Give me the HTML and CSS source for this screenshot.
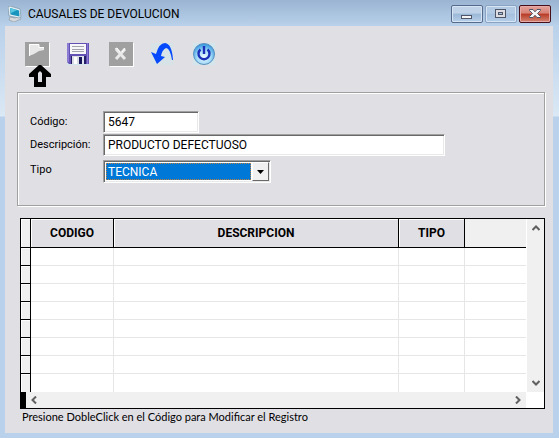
FILE: index.html
```html
<!DOCTYPE html>
<html lang="es">
<head>
<meta charset="utf-8">
<title>CAUSALES DE DEVOLUCION</title>
<link rel="stylesheet" href="styles.css">
</head>
<body>
<div class="window">
  <header class="titlebar">
    <svg class="app-icon" width="14" height="16" viewBox="0 0 14 16" aria-hidden="true">
      <path d="M2 11L7 12L12 10L13 13L6 16L1 14Z" fill="#d5d9dc" stroke="#8c969d" stroke-width=".6"/>
      <path d="M0 1L2 0L12 3L13 11L11 12L1 10Z" fill="#e4eef3" stroke="#7893a5" stroke-width=".7"/>
      <path d="M2 2L11 4.500L11.500 10.500L2.500 8.500Z" fill="#1795bd"/>
      <path d="M2 2L9 4L3 7Z" fill="#5ac6df"/>
    </svg>
    <h1 class="title">CAUSALES DE DEVOLUCION</h1>
    <div class="controls">
      <button class="control" type="button" aria-label="Minimizar"><svg width="12" height="12" viewBox="0 0 12 12"><rect x=".5" y="7.500" width="10" height="3" fill="#f4f4f4" stroke="#50566a"/></svg></button>
      <button class="control control-off" type="button" aria-label="Maximizar"><svg width="12" height="12" viewBox="0 0 12 12"><rect x=".5" y="1.500" width="10" height="8" fill="#dcdde2" stroke="#50566a"/><rect x="3.500" y="4.500" width="4" height="2" fill="#a9bfdb" stroke="#50566a"/></svg></button>
      <button class="control control-close" type="button" aria-label="Cerrar"><svg width="12" height="12" viewBox="0 0 12 12"><path d="M.5 1.500H4L6 3.800L8 1.500H11.500V2.500L8.500 5.500L11.500 8.500V9.500H8L6 7.300L4 9.500H.5V8.500L3.500 5.500L.5 2.500Z" fill="#f4f4f4" stroke="#505468"/></svg></button>
    </div>
  </header>
  <main class="client">
    <div class="toolbar">
      <button class="tool tool-off" type="button" aria-label="Nuevo">
        <svg width="24" height="24" viewBox="0 0 24 24"><path d="M4 2H14V5H19V8L14 9L9 12L4 14Z" fill="#e8e8e8"/><path d="M4.500 14V2.500H14V5.500H19" fill="none" stroke="#fff"/></svg>
        <svg class="pointer" width="24" height="22" viewBox="0 0 24 22"><path d="M11 0H13L23 9V12H18V22H6V12H1V9Z"/><path d="M12 6L14 8V17H10V8Z" fill="#e0dfe4"/></svg>
      </button>
      <button class="tool" type="button" aria-label="Guardar">
        <svg width="24" height="24" viewBox="0 0 24 24"><rect x="0" y="1" width="22" height="22" fill="#d2e6ec"/><path d="M0 1H22V22H2L0 20Z" fill="#6351b5"/><path d="M0 1H2V20H0ZM20 1H21V22H20Z" fill="#8c7bd2"/><rect x="3" y="2" width="16" height="10" fill="#f7f7f9"/><path d="M5 4.500H17M5 7.500H17M5 9.500H17" stroke="#a2a2ac"/><path d="M4 14H19V22H4Z" fill="#252066"/><path d="M5 14H14V22H5Z" fill="#d9dce4"/><path d="M7 15H10V22H7Z" fill="#fff"/><path d="M14 14H17V22H14Z" fill="#dfe4ee"/><path d="M12 15H15V22H12Z" fill="#18175b"/></svg>
      </button>
      <button class="tool tool-off" type="button" aria-label="Eliminar">
        <svg width="24" height="24" viewBox="0 0 24 24"><path d="M7 7L16 17M16 7L7 17" stroke="#e9e9e9" stroke-width="3"/><path d="M6 7L8 6L11 10M13 10L16 6" stroke="#fff" fill="none"/></svg>
      </button>
      <button class="tool" type="button" aria-label="Deshacer">
        <svg width="24" height="24" viewBox="0 0 24 24"><rect x="0" y="1" width="22" height="22" fill="#d8e3e8"/><path d="M0 10L5 12Q8 1 14 1Q21 2 22 18H21Q19 6 15 6Q11 8 10 14L14 15L6 22Z" fill="#0648fb"/></svg>
      </button>
      <button class="tool" type="button" aria-label="Salir">
        <svg width="24" height="24" viewBox="0 0 24 24"><defs><radialGradient id="orb" cx=".5" cy=".65" r=".6"><stop offset="0" stop-color="#f0fbff"/><stop offset=".55" stop-color="#a4dbf7"/><stop offset="1" stop-color="#3d9de3"/></radialGradient></defs><rect x="0" y="1" width="22" height="22" fill="#d2e6ec"/><circle cx="11" cy="12" r="10.500" fill="url(#orb)" stroke="#5e8fbc"/><path d="M7.500 7.500A5.500 5.500 0 1 0 14.500 7.500M11 4V12" fill="none" stroke="#1b2fb8" stroke-width="2.400"/></svg>
      </button>
    </div>
    <form class="panel">
      <label for="codigo">Código:</label>
      <input class="field field-code" id="codigo" type="text" value="5647">
      <label for="descripcion">Descripción:</label>
      <input class="field field-desc" id="descripcion" type="text" value="PRODUCTO DEFECTUOSO">
      <label for="tipo">Tipo</label>
      <div class="field combo">
        <select id="tipo"><option>TECNICA</option></select>
        <span class="combo-arrow"><svg width="7" height="4" viewBox="0 0 7 4"><path d="M0 0H7L3.500 4Z"/></svg></span>
      </div>
    </form>
    <section class="grid">
      <table>
        <colgroup><col class="col-mark"><col class="col-code"><col class="col-desc"><col class="col-type"><col></colgroup>
        <thead><tr><th class="mark"></th><th>CODIGO</th><th>DESCRIPCION</th><th>TIPO</th><th class="rest"></th></tr></thead>
        <tbody>
          <tr><td class="mark"></td><td></td><td></td><td></td><td></td></tr>
          <tr><td class="mark"></td><td></td><td></td><td></td><td></td></tr>
          <tr><td class="mark"></td><td></td><td></td><td></td><td></td></tr>
          <tr><td class="mark"></td><td></td><td></td><td></td><td></td></tr>
          <tr><td class="mark"></td><td></td><td></td><td></td><td></td></tr>
          <tr><td class="mark"></td><td></td><td></td><td></td><td></td></tr>
          <tr><td class="mark"></td><td></td><td></td><td></td><td></td></tr>
          <tr><td class="mark"></td><td></td><td></td><td></td><td></td></tr>
        </tbody>
      </table>
      <div class="scroll scroll-v">
        <button type="button" aria-label="Subir"><svg width="8" height="8" viewBox="0 0 8 8"><path d="M.5 6L4 2.500L7.500 6"/></svg></button>
        <button type="button" aria-label="Bajar"><svg width="8" height="8" viewBox="0 0 8 8"><path d="M.5 2L4 5.500L7.500 2"/></svg></button>
      </div>
      <div class="scroll scroll-h">
        <button type="button" aria-label="Izquierda"><svg width="8" height="8" viewBox="0 0 8 8"><path d="M6 .5L2.500 4L6 7.500"/></svg></button>
        <button type="button" aria-label="Derecha"><svg width="8" height="8" viewBox="0 0 8 8"><path d="M2 .5L5.500 4L2 7.500"/></svg></button>
      </div>
    </section>
    <p class="hint">Presione DobleClick en el Código para Modificar el Registro</p>
  </main>
</div>
</body>
</html>
```
FILE: styles.css
```css
* { box-sizing: border-box; }

body {
  margin: 0;
  font: 11px/16px Roboto, "Liberation Sans", sans-serif;
  color: #000;
}

button {
  padding: 0;
  border: 0;
  background: none;
}

svg { display: block; }

.window {
  display: flex;
  flex-direction: column;
  min-height: 100vh;
  padding: 0 6px 5px 5px;
  background: linear-gradient(#9ab4d2 0, #b9d1ea 26px, #dbe8f5 116px, #b9d1ea 117px);
}

.titlebar {
  display: flex;
  align-items: center;
  height: 26px;
  padding: 2px 2px 0 3px;
}

.title {
  flex: 1;
  margin: 0 0 0 6px;
  font: 12px/16px Roboto, "Open Sans", sans-serif;
}

.controls {
  display: flex;
  gap: 2px;
}

.control {
  display: flex;
  align-items: center;
  justify-content: center;
  width: 32px;
  height: 18px;
  border: 1px solid #566a8c;
  border-radius: 2px;
  box-shadow: inset 0 0 0 1px #d6e4f3;
  background: linear-gradient(#bfd2e8 0 45%, #9bb7d6 50%, #b7d0ea);
}

.control-off {
  border-color: #8ba3c2;
  background: linear-gradient(#b3cae4 0 45%, #a5c0de 50%, #b4cee9);
}

.control-close {
  border-color: #460e18;
  box-shadow: inset 0 0 0 1px #e5aaa5;
  background: linear-gradient(#e5a29a 0, #d78176 45%, #b83a25 50%, #d38673);
}

.client {
  flex: 1;
  padding: 16px 8px 0 12px;
  background: #e0dfe4;
}

.toolbar {
  display: flex;
  gap: 18px;
  padding-left: 8px;
}

.tool {
  position: relative;
  width: 24px;
  height: 24px;
}

.tool-off {
  background: #a0a0a0;
  box-shadow: 1px 1px 0 #fff;
}

.pointer {
  position: absolute;
  top: 23px;
  left: 3px;
  z-index: 1;
}

.panel {
  display: grid;
  grid-template: 22px 22px 26px / 73px 1fr;
  align-items: center;
  gap: 1px 0;
  margin-top: 26px;
  padding: 18px 12px 22px;
  border: 1px solid #a0a0a0;
  box-shadow: 1px 1px 0 #fff, inset 1px 1px 0 #fff;
}

.field {
  height: 22px;
  padding: 0 4px;
  border: 1px solid;
  border-color: #a0a0a0 #fff #fff #a0a0a0;
  border-radius: 0;
  outline: 0;
  box-shadow: inset 1px 1px 0 #696969, inset -1px -1px 0 #e9e9e9;
  background: #fff;
  font: 12px/16px Roboto, "Liberation Sans", sans-serif;
}

.field-code { width: 96px; }

.field-desc {
  width: 342px;
  max-width: 100%;
}

.combo {
  display: flex;
  align-self: end;
  width: 168px;
  height: 23px;
  padding: 1px;
}

.combo select {
  flex: 1;
  margin: 1px;
  padding: 0 1px;
  border: 1px dotted #c08040;
  border-radius: 0;
  outline: 0;
  appearance: none;
  background: #0078d7;
  color: #fff;
  font: inherit;
}

.combo-arrow {
  display: flex;
  align-items: center;
  justify-content: center;
  width: 17px;
  border: 1px solid;
  border-color: #fff #696969 #696969 #fff;
  background: #f0f0f0;
}

.grid {
  display: grid;
  grid-template-columns: 1fr 18px;
  margin: 12px 0 0 3px;
  border: 1px solid #000;
  background: #fff;
}

table {
  width: 100%;
  border-collapse: separate;
  border-spacing: 0;
  table-layout: fixed;
}

.col-mark { width: 10px; }
.col-code { width: 83px; }
.col-desc { width: 285px; }
.col-type { width: 66px; }

th {
  height: 29px;
  padding: 0;
  border-right: 1px solid #000;
  border-bottom: 1px solid #000;
  box-shadow: inset 1px 1px 0 #fff;
  background: #e0dfe4;
  font: bold 12px/16px Roboto, "Liberation Sans", sans-serif;
}

th.rest {
  border-right: 0;
  box-shadow: none;
  background: #f0f0f0;
}

td {
  height: 18px;
  padding: 0;
  border-right: 1px solid #e6e6e6;
  border-bottom: 1px solid #e6e6e6;
}

td:last-child { border-right: 0; }

tr:last-child td { border-bottom: 0; }

.mark,
td.mark {
  border-color: #000;
  box-shadow: inset 1px 1px 0 #fff;
  background: #f0f0f0;
}

.scroll {
  display: flex;
  justify-content: space-between;
  background: #f0f0f0;
}

.scroll svg {
  fill: none;
  stroke: #606060;
  stroke-width: 2;
}

.scroll-v {
  flex-direction: column;
  align-items: center;
  padding: 5px 0;
  border-left: 1px solid #fff;
}

.scroll-h {
  align-items: center;
  height: 16px;
  padding: 0 4px;
  border-left: 5px solid #000;
}

.hint {
  margin: 0 5px;
  font-family: Lato, "Liberation Sans", sans-serif;
}
```
